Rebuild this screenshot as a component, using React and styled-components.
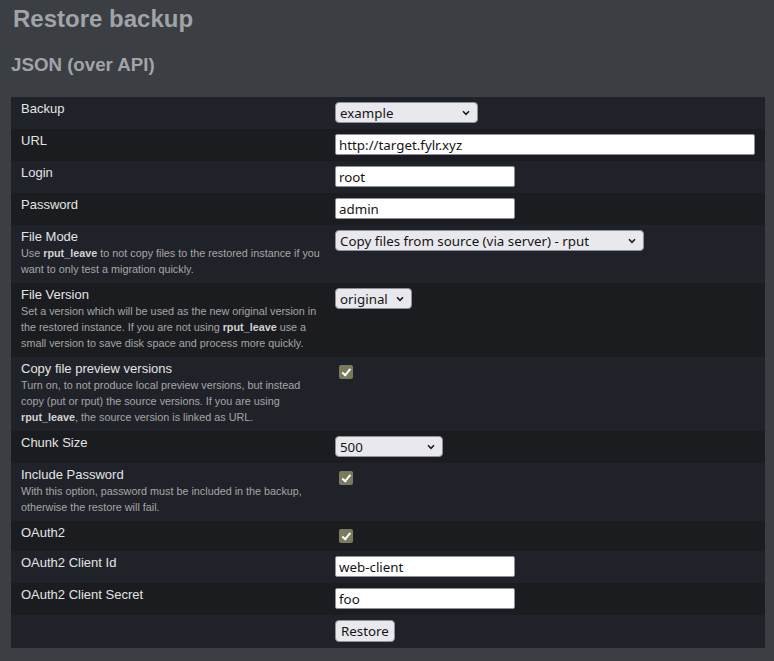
import React from 'react';
import styled, { createGlobalStyle } from 'styled-components';

const GlobalStyle = createGlobalStyle`
  body {
    margin: 0;
    background: #3b3e42;
    font-family: "Liberation Sans", Arial, sans-serif;
  }
`;

const Page = styled.div`
  padding: 5px 9px 14px 11px;
`;

const Title = styled.h1`
  margin: 0;
  padding-left: 2px;
  font-size: 24px;
  line-height: 28px;
  font-weight: bold;
  color: #a0a4a8;
`;

const Subtitle = styled.h3`
  margin: 21px 0 21px;
  font-size: 18.72px;
  line-height: 22px;
  font-weight: bold;
  color: #a0a4a8;
`;

const Form = styled.div`
  display: flex;
  flex-direction: column;
`;

const Row = styled.div`
  display: grid;
  grid-template-columns: 324px 1fr;
  background: #202229;
  &:nth-child(even) {
    background: #1b1c20;
  }
`;

const LabelCell = styled.div`
  padding: 4px 10px 6px;
  color: #e4e4e4;
  font-size: 13px;
  line-height: 16px;
`;

const Hint = styled.div`
  color: #a6a6a6;
  font-size: 10.8px;
  line-height: 16px;
  b {
    color: #d2d2d2;
  }
`;

const ControlCell = styled.div`
  padding: 5px 10px 6px 0;
  display: flex;
  align-items: flex-start;
`;

const controlFont = `
  font-family: "Noto Sans", "DejaVu Sans", sans-serif;
  font-size: 13.33px;
  color: #151515;
`;

const TextInput = styled.input`
  ${controlFont}
  box-sizing: border-box;
  height: 21px;
  width: ${(p) => (p.$wide ? '100%' : '180px')};
  padding: 0 3px;
  margin: 0;
  border: 1px solid #8f8f9d;
  border-radius: 2px;
  background: #fff;
  outline: none;
`;

const SelectWrap = styled.div`
  position: relative;
  display: inline-flex;
`;

const Select = styled.select`
  ${controlFont}
  appearance: none;
  box-sizing: border-box;
  height: 21px;
  width: ${(p) => p.$w}px;
  padding: 0 20px 0 4px;
  margin: 0;
  border: 1px solid #8f8f9d;
  border-radius: 4px;
  background: #e9e9ed;
  outline: none;
`;

const Chevron = styled.svg`
  position: absolute;
  right: 8px;
  top: 8px;
  pointer-events: none;
`;

const Check = styled.input.attrs({ type: 'checkbox' })`
  appearance: none;
  position: relative;
  box-sizing: border-box;
  width: 14px;
  height: 14px;
  margin: 3px 3px 2px 4px;
  border-radius: 2px;
  background: #7b7a5c;
  &::after {
    content: '';
    position: absolute;
    left: 4.5px;
    top: 1.5px;
    width: 3px;
    height: 6.5px;
    border: solid #fff;
    border-width: 0 2.2px 2.2px 0;
    transform: rotate(40deg);
  }
`;

const Button = styled.button`
  ${controlFont}
  box-sizing: border-box;
  height: 22px;
  padding: 0 5px;
  margin: 0;
  border: 1px solid #8f8f9d;
  border-radius: 4px;
  background: #e9e9ed;
`;

function Dropdown({ width, value, options }) {
  return (
    <SelectWrap>
      <Select $w={width} defaultValue={value}>
        {options.map((o) => (
          <option key={o}>{o}</option>
        ))}
      </Select>
      <Chevron width="8" height="6" viewBox="0 0 8 6">
        <path d="M1 1.3 L4 4.3 L7 1.3" fill="none" stroke="#1a1a1a" strokeWidth="1.6" />
      </Chevron>
    </SelectWrap>
  );
}

function Field({ label, hint, children }) {
  return (
    <Row>
      <LabelCell>
        {label}
        {hint && <Hint>{hint}</Hint>}
      </LabelCell>
      <ControlCell>{children}</ControlCell>
    </Row>
  );
}

export default function App() {
  return (
    <Page>
      <GlobalStyle />
      <Title>Restore backup</Title>
      <Subtitle>JSON (over API)</Subtitle>
      <Form>
        <Field label="Backup">
          <Dropdown width={143} value="example" options={['example']} />
        </Field>
        <Field label="URL">
          <TextInput $wide defaultValue="http://target.fylr.xyz" />
        </Field>
        <Field label="Login">
          <TextInput defaultValue="root" />
        </Field>
        <Field label="Password">
          <TextInput defaultValue="admin" />
        </Field>
        <Field
          label="File Mode"
          hint={
            <>
              Use <b>rput_leave</b> to not copy files to the restored instance if you
              <br />
              want to only test a migration quickly.
            </>
          }
        >
          <Dropdown
            width={309}
            value="Copy files from source (via server) - rput"
            options={['Copy files from source (via server) - rput', 'rput_leave']}
          />
        </Field>
        <Field
          label="File Version"
          hint={
            <>
              Set a version which will be used as the new original version in
              <br />
              the restored instance. If you are not using <b>rput_leave</b> use a
              <br />
              small version to save disk space and process more quickly.
            </>
          }
        >
          <Dropdown width={77} value="original" options={['original']} />
        </Field>
        <Field
          label="Copy file preview versions"
          hint={
            <>
              Turn on, to not produce local preview versions, but instead
              <br />
              copy (put or rput) the source versions. If you are using
              <br />
              <b>rput_leave</b>, the source version is linked as URL.
            </>
          }
        >
          <Check defaultChecked />
        </Field>
        <Field label="Chunk Size">
          <Dropdown width={108} value="500" options={['500']} />
        </Field>
        <Field
          label="Include Password"
          hint={
            <>
              With this option, password must be included in the backup,
              <br />
              otherwise the restore will fail.
            </>
          }
        >
          <Check defaultChecked />
        </Field>
        <Field label="OAuth2">
          <Check defaultChecked />
        </Field>
        <Field label="OAuth2 Client Id">
          <TextInput defaultValue="web-client" />
        </Field>
        <Field label="OAuth2 Client Secret">
          <TextInput defaultValue="foo" />
        </Field>
        <Field label="">
          <Button>Restore</Button>
        </Field>
      </Form>
    </Page>
  );
}
